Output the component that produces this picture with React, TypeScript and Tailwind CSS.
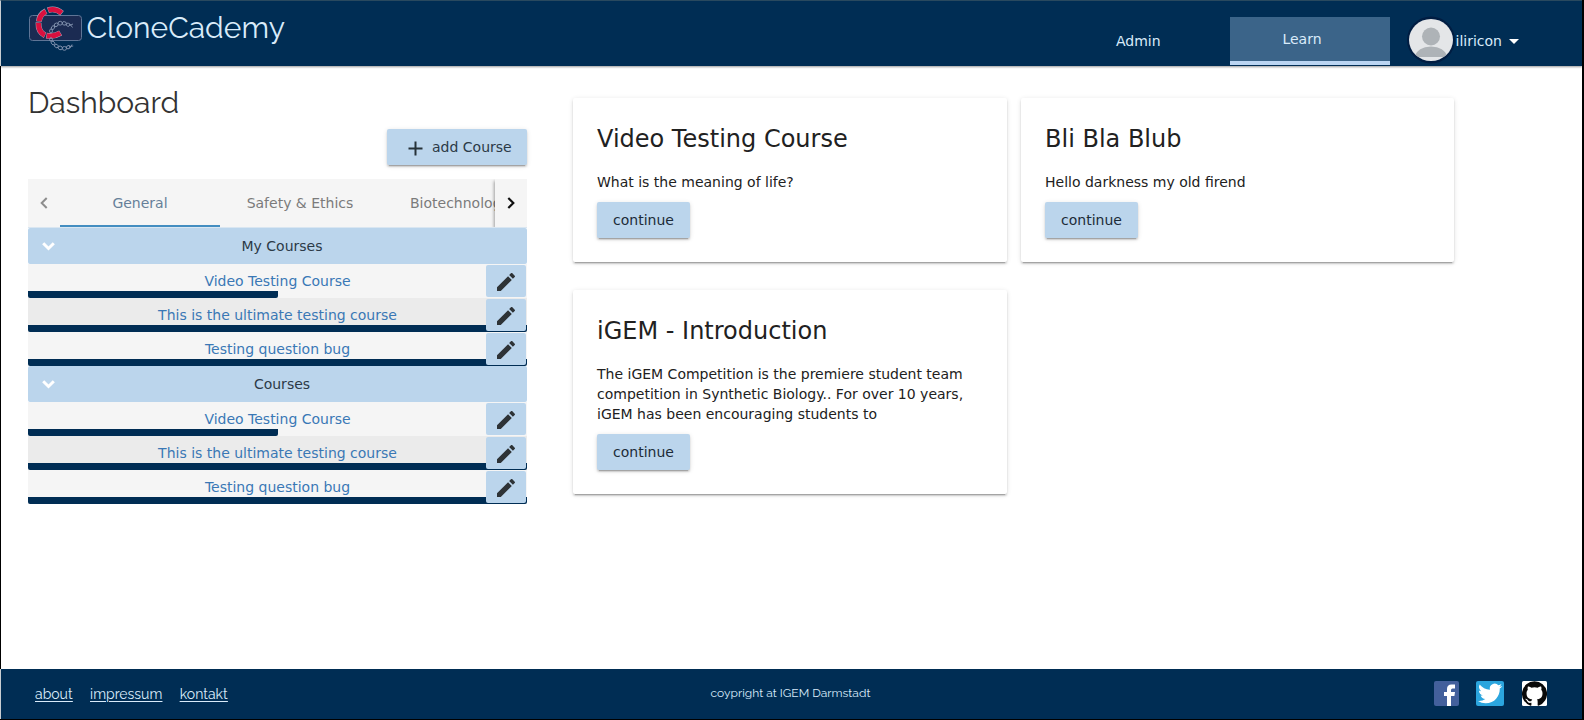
import React from "react";

const raleway = "font-['Raleway','Lato',sans-serif]";

function Logo() {
  return (
    <svg width="56" height="48" viewBox="28 5 56 48" fill="none" className="shrink-0">
      <rect x="29.5" y="15.5" width="52" height="25" rx="3" fill="#1b2b52" stroke="#5f7596" />
      <g stroke="#a9b2c6" strokeWidth="5.8">
        <path d="M48 10.3Q55 7.600 62 13.2" />
        <path d="M46 11.200Q39.500 14.500 38.900 21.500" />
        <path d="M38.500 22.500Q38 32 45 35.300" />
        <path d="M46.400 35.600Q54 37 60.600 33" />
      </g>
      <g stroke="#d9103f" strokeWidth="5">
        <path d="M48.300 10.200Q55 7.700 61.700 13" />
        <path d="M45.800 11.400Q39.700 14.500 39 21.200" />
        <path d="M38.500 22.900Q38.200 32 44.800 35.200" />
        <path d="M46.800 35.700Q54 36.900 60.300 33.200" />
      </g>
      <g stroke="#8494b0" strokeWidth="0.9">
        <ellipse cx="51" cy="31" rx="1.400" ry="2" />
        <ellipse cx="53" cy="27.600" rx="1.500" ry="2" transform="rotate(35 53 27.600)" />
        <ellipse cx="56.200" cy="24.700" rx="2" ry="1.600" transform="rotate(-30 56.200 24.700)" />
        <ellipse cx="60.200" cy="23.200" rx="2.100" ry="1.900" />
        <ellipse cx="64.300" cy="23.400" rx="2.100" ry="1.700" transform="rotate(15 64.300 23.400)" />
        <ellipse cx="68" cy="24.700" rx="1.800" ry="1.500" transform="rotate(20 68 24.700)" />
        <path d="M69.500 25.500L73 24M69.500 23.500L72.500 27.500" />
        <ellipse cx="51" cy="39.500" rx="1.400" ry="1.800" />
        <ellipse cx="53" cy="43" rx="1.500" ry="2" transform="rotate(-35 53 43)" />
        <ellipse cx="56.400" cy="46" rx="2" ry="1.600" transform="rotate(35 56.400 46)" />
        <ellipse cx="60.300" cy="47.900" rx="2.100" ry="1.800" transform="rotate(15 60.300 47.900)" />
        <ellipse cx="64.400" cy="48.400" rx="2.100" ry="1.900" />
        <ellipse cx="68.200" cy="47.200" rx="1.800" ry="1.500" transform="rotate(-25 68.200 47.200)" />
        <path d="M69.500 46.500L73.200 46M69.800 48.300L72 44.500" />
      </g>
    </svg>
  );
}

function CourseRow({ title, half, shaded }: { title: string; half?: boolean; shaded?: boolean }) {
  return (
    <div className={`relative flex h-[34px] flex-col ${shaded ? "bg-[#ebebeb]" : "bg-[#f5f5f5]"}`}>
      <a className="h-[27px] pt-[7px] text-center leading-5 text-[#3a78b5]">{title}</a>
      <div className={`h-[7px] rounded-b-[2px] bg-[#002d54] ${half ? "w-1/2" : "w-full"}`} />
      <button className="absolute top-px right-px flex h-8 w-10 items-center justify-center rounded-[2px] bg-[#bbd5ec]">
        <svg width="24" height="24" viewBox="0 0 24 24" fill="#2e3336" className="mt-[2px]">
          <path d="M3 17.250V21h3.750L17.810 9.940l-3.750-3.750L3 17.250zM20.710 7.040c.39-.39.39-1.020 0-1.410l-2.340-2.340c-.39-.39-1.020-.39-1.410 0l-1.830 1.830 3.750 3.750 1.830-1.830z" />
        </svg>
      </button>
    </div>
  );
}

function Section({ name }: { name: string }) {
  return (
    <section>
      <div className="flex h-9 items-center rounded-[2px] bg-[#bbd5ec] text-[#2c3a47]">
        <svg width="13" height="9" viewBox="0 0 13 9" fill="none" stroke="#fff" strokeWidth="3" className="mt-px ml-[14px]">
          <path d="M1.200 1.300L6.500 6.500L11.800 1.300" />
        </svg>
        <span className="flex-1 pr-[18px] text-center">{name}</span>
      </div>
      <CourseRow title="Video Testing Course" half />
      <CourseRow title="This is the ultimate testing course" shaded />
      <CourseRow title="Testing question bug" />
    </section>
  );
}

const raised = "shadow-[0_3px_1px_-2px_rgba(0,0,0,0.2),0_2px_2px_0_rgba(0,0,0,0.14),0_1px_5px_0_rgba(0,0,0,0.12)]";

function Card({ title, text }: { title: string; text: string }) {
  return (
    <article className={`rounded-[2px] bg-white px-6 pt-[25px] pb-6 text-[#212121] ${raised}`}>
      <h2 className="text-2xl leading-8">{title}</h2>
      <p className="mt-[17px] leading-5">{text}</p>
      <button className={`mt-[10px] h-9 w-[93px] rounded-[2px] bg-[#bbd5ec] text-[#1c2b38] ${raised}`}>continue</button>
    </article>
  );
}

export default function App() {
  return (
    <div className="flex h-[720px] w-[1584px] flex-col overflow-hidden border-r-2 border-b border-black bg-white font-['DejaVu_Sans',sans-serif] text-sm">
      <header className="z-10 flex h-[66px] shrink-0 border-t border-l border-t-[#29495f] border-l-[#c8cdd2] bg-[#002d54] text-[#d9ebfa] shadow-[0_1px_2px_rgba(0,0,0,0.4)]">
        <div className="flex pt-[4px] pl-[27px]">
          <Logo />
          <span className={`${raleway} mt-[3px] ml-[2.5px] text-[30px] leading-10`}>CloneCademy</span>
        </div>
        <nav className="ml-auto flex">
          <a className="w-[114px] pt-[30px] leading-5">Admin</a>
          <a className="mt-4 h-12 w-40 border-b-4 border-[#bbd5f2] bg-[#3b6489] pt-3 pr-[16px] text-center leading-5">Learn</a>
          <div className="ml-[19px] flex w-[173px] items-start">
            <svg width="44" height="44" viewBox="0 0 44 44" className="mt-[17px] shrink-0 overflow-visible">
              <ellipse cx="22" cy="22" rx="24" ry="23.500" fill="#001d42" />
              <clipPath id="face"><ellipse cx="22" cy="22" rx="22" ry="21" /></clipPath>
              <g clipPath="url(#face)">
                <rect width="44" height="44" fill="#e4e6e8" />
                <circle cx="22" cy="18.500" r="9" fill="#aeb3b7" />
                <path d="M5 39Q9 28.500 22 28.500T39 39z" fill="#aeb3b7" />
              </g>
            </svg>
            <span className="mt-[30px] ml-[2.5px] leading-5">iliricon</span>
            <svg width="10" height="5" viewBox="0 0 10 5" className="mt-[38px] ml-[7.5px]"><path d="M0 0h10L5 5z" fill="#fff" /></svg>
          </div>
        </nav>
      </header>

      <main className="flex flex-1 border-l border-black pl-[27px]">
        <div className="w-[499px]">
          <h1 className={`${raleway} mt-[17px] text-[30px] leading-10 text-[#333]`}>Dashboard</h1>
          <button className={`mt-[6px] ml-auto flex h-9 w-[140px] items-center rounded-[2px] bg-[#bbd5ec] pl-[21px] text-[#2c3a47] ${raised}`}>
            <svg width="15" height="15" viewBox="0 0 15 15" stroke="#263238" strokeWidth="2" className="mt-[2px]"><path d="M7.500 0.500V14.500M0.500 7.500H14.500" /></svg>
            <span className="ml-[9px]">add Course</span>
          </button>
          <div className="mt-[14px] flex h-12 overflow-hidden bg-[#f5f5f5] text-[#7b7b7b]">
            <div className="flex w-8 shrink-0 items-center justify-center">
              <svg width="8" height="12" viewBox="0 0 8 12" fill="none" stroke="#8d8d8d" strokeWidth="2"><path d="M6.700 1L1.700 6L6.700 11" /></svg>
            </div>
            <div className="flex flex-1 overflow-hidden leading-[48px] whitespace-nowrap">
              <a className="w-40 shrink-0 border-b-2 border-[#438dc0] text-center text-[#667f99]">General</a>
              <a className="w-40 shrink-0 text-center">Safety &amp; Ethics</a>
              <a className="w-40 shrink-0 pl-[30px]">Biotechnology</a>
            </div>
            <div className="flex w-8 shrink-0 items-center justify-center bg-[#f5f5f5] shadow-[-1px_2px_3px_rgba(0,0,0,0.35)]">
              <svg width="8" height="12" viewBox="0 0 8 12" fill="none" stroke="#111" strokeWidth="2.200"><path d="M1.300 1L6.300 6L1.300 11" /></svg>
            </div>
          </div>
          <div className="h-px bg-[#d9e6f1]" />
          <Section name="My Courses" />
          <Section name="Courses" />
        </div>
        <div className="mt-8 ml-[46px] grid w-[881px] grid-cols-[434px_433px] content-start items-start gap-x-[14px] gap-y-7">
          <Card title="Video Testing Course" text="What is the meaning of life?" />
          <Card title="Bli Bla Blub" text="Hello darkness my old firend" />
          <Card title="iGEM - Introduction" text="The iGEM Competition is the premiere student team competition in Synthetic Biology.. For over 10 years, iGEM has been encouraging students to" />
        </div>
      </main>

      <footer className={`${raleway} grid h-[50px] shrink-0 grid-cols-3 items-center border-l border-[#c8cdd2] bg-[#002d54] text-[#d9ebfa]`}>
        <div className="flex gap-[17.5px] pb-px pl-[34px] text-[14px] underline underline-offset-2">
          <a>about</a>
          <a>impressum</a>
          <a>kontakt</a>
        </div>
        <span className="pr-[2px] text-center text-[12px]">coypright at IGEM Darmstadt</span>
        <div className="flex items-center justify-end pr-[35px] pb-px">
          <svg width="25" height="25" viewBox="0 0 25 25">
            <rect width="25" height="25" rx="2" fill="#43609c" />
            <path d="M13 25V15H10V11H13V8Q13 3.500 17.500 3.500H21V7.500H18.500Q17 7.500 17 9V11H21L20.400 15H17V25z" fill="#fff" />
          </svg>
          <svg width="28" height="25" viewBox="0 0 28 25" className="ml-[17px]">
            <rect width="28" height="25" rx="2" fill="#2ba5de" />
            <path transform="translate(2 .3) scale(1.010)" d="M23.950 4.570a10 10 0 01-2.820.77 4.960 4.960 0 002.160-2.720c-.95.550-2 .95-3.130 1.180a4.920 4.920 0 00-8.380 4.480C7.690 8.100 4.070 6.130 1.640 3.160a4.920 4.920 0 001.520 6.570 4.900 4.900 0 01-2.230-.61v.06c0 2.390 1.710 4.370 3.950 4.830a5 5 0 01-2.210.08 4.940 4.940 0 004.600 3.420A9.870 9.870 0 010 19.540a13.990 13.990 0 007.550 2.210c9.050 0 14-7.500 14-13.980 0-.21 0-.42-.02-.63a9.940 9.940 0 002.460-2.550z" fill="#fff" />
          </svg>
          <svg width="25" height="25" viewBox="0 0 24 24" className="ml-[18px]">
            <rect width="24" height="24" rx="1.500" fill="#fff" />
            <path d="M12 .3a12 12 0 00-3.790 23.390c.6.110.82-.26.82-.58v-2.230c-3.340.730-4.040-1.420-4.040-1.420-.55-1.390-1.330-1.760-1.330-1.760-1.090-.74.080-.73.080-.73 1.200.090 1.840 1.240 1.840 1.240 1.070 1.830 2.810 1.300 3.490 1 .11-.78.420-1.310.760-1.610-2.660-.3-5.470-1.330-5.470-5.930 0-1.310.470-2.380 1.240-3.220-.12-.3-.54-1.520.12-3.180 0 0 1.010-.32 3.300 1.230a11.500 11.500 0 016.010 0c2.290-1.550 3.300-1.230 3.300-1.230.66 1.660.24 2.880.12 3.180.77.84 1.230 1.910 1.230 3.220 0 4.610-2.810 5.630-5.480 5.920.43.370.82 1.100.82 2.220v3.290c0 .32.220.7.830.58A12 12 0 0012 .3" fill="#090909" />
          </svg>
        </div>
      </footer>
    </div>
  );
}
